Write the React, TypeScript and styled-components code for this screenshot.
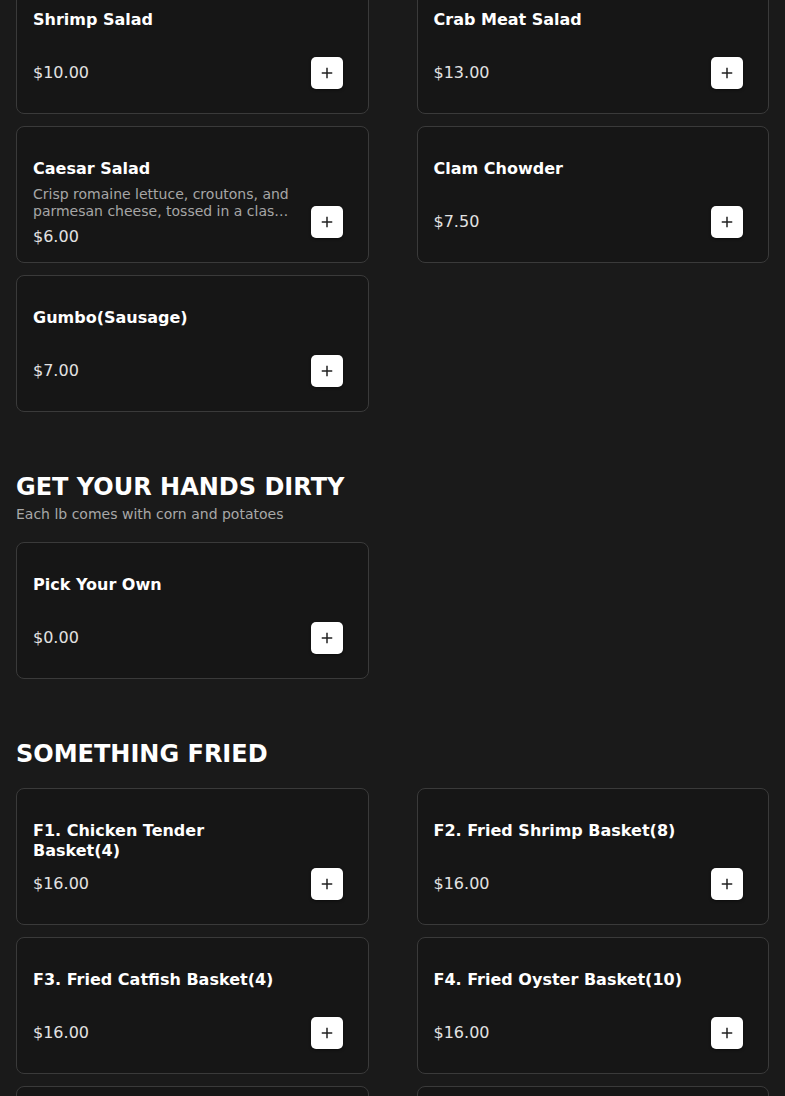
import React from "react";
import styled, { createGlobalStyle } from "styled-components";

const GlobalStyle = createGlobalStyle`
  html, body {
    margin: 0;
    padding: 0;
    background: #1a1a1a;
  }
  body {
    font-family: "DejaVu Sans", "Liberation Sans", sans-serif;
    color: #ffffff;
    overflow: hidden;
  }
  * { box-sizing: border-box; }
`;

const Page = styled.main`
  padding: 0 16px;
  margin-top: -23px;
  display: flex;
  flex-direction: column;
`;

const Section = styled.section`
  display: flex;
  flex-direction: column;
  & + & {
    margin-top: 61px;
  }
`;

const SectionHeader = styled.header`
  display: flex;
  flex-direction: column;
  margin-bottom: 20px;
`;

const SectionTitle = styled.h2`
  margin: 0;
  font-size: 24px;
  line-height: 28px;
  font-weight: 700;
  color: #ffffff;
`;

const SectionSubtitle = styled.p`
  margin: 6px 0 0;
  font-size: 14px;
  line-height: 15px;
  color: #a8a8a8;
`;

const Grid = styled.div`
  display: grid;
  grid-template-columns: 1fr 1fr;
  column-gap: 48px;
  row-gap: 12px;
`;

const Card = styled.article`
  height: 137px;
  display: flex;
  align-items: flex-end;
  padding: 32px 16px 16px;
  background: #161616;
  border: 1px solid #3a3a3a;
  border-radius: 8px;
`;

const Info = styled.div`
  flex: 1;
  min-width: 0;
  align-self: flex-start;
  display: flex;
  flex-direction: column;
`;

const TopBlock = styled.div`
  min-height: 46px;
  display: flex;
  flex-direction: column;
`;

const ItemName = styled.h3`
  margin: 0;
  font-size: 16px;
  line-height: 20px;
  font-weight: 700;
  color: #ffffff;
`;

const Description = styled.p`
  margin: 7px 0 0;
  font-size: 14px;
  line-height: 17px;
  color: #a6a6a6;
  display: -webkit-box;
  -webkit-line-clamp: 2;
  -webkit-box-orient: vertical;
  overflow: hidden;
`;

const Price = styled.div`
  margin-top: 7px;
  font-size: 16px;
  line-height: 20px;
  color: #e2e2e2;
`;

const AddButton = styled.button`
  flex: none;
  width: 32px;
  height: 32px;
  margin: 0 9px 8px 17px;
  padding: 0;
  display: flex;
  align-items: center;
  justify-content: center;
  background: #ffffff;
  border: none;
  border-radius: 5px;
  box-shadow: 0 1px 3px rgba(0, 0, 0, 0.5);
  cursor: pointer;
`;

const PlusIcon = () => (
  <svg width="12" height="12" viewBox="0 0 12 12" aria-hidden="true">
    <path d="M6 1.5v9M1.5 6h9" stroke="#222222" strokeWidth="1.5" strokeLinecap="square" fill="none" />
  </svg>
);

type Item = { name: string; price: string; desc?: string };

const MenuCard = ({ item }: { item: Item }) => (
  <Card>
    <Info>
      <TopBlock>
        <ItemName>{item.name}</ItemName>
        {item.desc && <Description>{item.desc}</Description>}
      </TopBlock>
      <Price>{item.price}</Price>
    </Info>
    <AddButton aria-label={`Add ${item.name}`}>
      <PlusIcon />
    </AddButton>
  </Card>
);

const salads: Item[] = [
  { name: "Shrimp Salad", price: "$10.00" },
  { name: "Crab Meat Salad", price: "$13.00" },
  {
    name: "Caesar Salad",
    price: "$6.00",
    desc: "Crisp romaine lettuce, croutons, and parmesan cheese, tossed in a classic Caesar dressing.",
  },
  { name: "Clam Chowder", price: "$7.50" },
  { name: "Gumbo(Sausage)", price: "$7.00" },
];

const dirty: Item[] = [{ name: "Pick Your Own", price: "$0.00" }];

const fried: Item[] = [
  { name: "F1. Chicken Tender Basket(4)", price: "$16.00" },
  { name: "F2. Fried Shrimp Basket(8)", price: "$16.00" },
  { name: "F3. Fried Catfish Basket(4)", price: "$16.00" },
  { name: "F4. Fried Oyster Basket(10)", price: "$16.00" },
  { name: "F5. Fried Fish Basket", price: "$16.00" },
  { name: "F6. Fried Combo Basket", price: "$16.00" },
];

export default function App() {
  return (
    <>
      <GlobalStyle />
      <Page>
        <Section>
          <Grid>
            {salads.map((it) => (
              <MenuCard key={it.name} item={it} />
            ))}
          </Grid>
        </Section>
        <Section>
          <SectionHeader>
            <SectionTitle>GET YOUR HANDS DIRTY</SectionTitle>
            <SectionSubtitle>Each lb comes with corn and potatoes</SectionSubtitle>
          </SectionHeader>
          <Grid>
            {dirty.map((it) => (
              <MenuCard key={it.name} item={it} />
            ))}
          </Grid>
        </Section>
        <Section>
          <SectionHeader>
            <SectionTitle>SOMETHING FRIED</SectionTitle>
          </SectionHeader>
          <Grid>
            {fried.map((it) => (
              <MenuCard key={it.name} item={it} />
            ))}
          </Grid>
        </Section>
      </Page>
    </>
  );
}
